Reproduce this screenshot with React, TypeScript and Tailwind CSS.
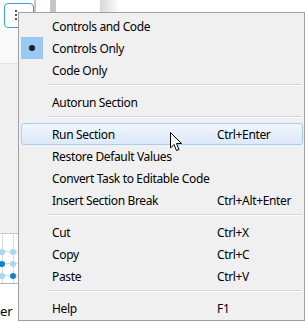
import React from 'react';

type Item = { label: string; shortcut?: string; checked?: boolean; active?: boolean } | 'sep';

const items: Item[] = [
  { label: 'Controls and Code' },
  { label: 'Controls Only', checked: true },
  { label: 'Code Only' },
  'sep',
  { label: 'Autorun Section' },
  'sep',
  { label: 'Run Section', shortcut: 'Ctrl+Enter', active: true },
  { label: 'Restore Default Values' },
  { label: 'Convert Task to Editable Code' },
  { label: 'Insert Section Break', shortcut: 'Ctrl+Alt+Enter' },
  'sep',
  { label: 'Cut', shortcut: 'Ctrl+X' },
  { label: 'Copy', shortcut: 'Ctrl+C' },
  { label: 'Paste', shortcut: 'Ctrl+V' },
  'sep',
  { label: 'Help', shortcut: 'F1' },
];

// Dots of the little grid in the background
const dots = [
  ['light', 'light'],
  ['dark', 'light'],
  ['light', 'dark'],
];

function Cursor() {
  return (
    <svg width="13" height="20" viewBox="0 0 13 20" className="absolute left-[170px] top-[132px]">
      <path
        d="M0.5 0.5 L0.5 16 L4 12.5 L6.5 18.5 L9 17.5 L6.5 11.5 L11.5 11.5 Z"
        fill="#fff"
        stroke="#000"
        strokeWidth="1"
        strokeLinejoin="miter"
      />
    </svg>
  );
}

export default function App() {
  return (
    <div
      className="relative w-[305px] h-[322px] overflow-hidden bg-white"
      style={{ fontFamily: '"Noto Sans", "Open Sans", sans-serif' }}
    >
      {/* background window */}
      <div className="flex h-full">
        <div className="flex flex-col w-[34px] h-full">
          <div className="h-[30px] bg-white pl-[4px] pt-[3px]">
            <div className="w-[30px] h-[25px] rounded-[4px] border border-[#3c9be6] flex flex-col items-start pl-[10px] pt-[6px] gap-[2px]">
              <span className="w-[2px] h-[2px] bg-[#555]" />
              <span className="w-[2px] h-[2px] bg-[#555]" />
              <span className="w-[2px] h-[2px] bg-[#555]" />
            </div>
          </div>
          <div className="h-[35px] bg-[#f9f9f9] border-b border-[#e2e2e2]" />
          <div className="h-[173px] bg-[#f0f0f0] border-b border-[#c8c8c8]" />
          <div className="relative h-[51px] bg-white flex flex-col pt-[15px] gap-[6px] border-b border-[#b4b4b4]">
            <div className="absolute left-[2px] top-0 bottom-0 w-px bg-[#d6dde3]" />
            <div className="absolute left-[13px] top-0 bottom-0 w-px bg-[#d6dde3]" />
            {dots.map((row, i) => (
              <div key={i} className="relative flex items-center h-[6px] gap-[5px] -ml-[1px]">
                <div className="absolute left-0 right-0 top-[2px] h-px bg-[#d6dde3]" />
                {row.map((d, j) => (
                  <span
                    key={j}
                    className={
                      d === 'dark'
                        ? 'relative w-[6px] h-[6px] rounded-full bg-[#0b83d4]'
                        : 'relative w-[6px] h-[6px] rounded-full bg-[#a6d8f2]'
                    }
                  />
                ))}
              </div>
            ))}
          </div>
          <div className="flex-1 bg-white pt-[14px]">
            <span className="whitespace-nowrap text-[13px] leading-[16px] text-black">er</span>
          </div>
        </div>
        <div className="w-[2px] h-[12px] bg-[#c4c4c4]" />
        <div className="w-[14px]" />
        <div className="w-[6px] h-[13px] bg-[#c6c6c6]" />
        <div className="w-[44px]" />
        <div className="w-[20px] h-[13px] bg-linear-to-r from-[#d8d8d8] to-white" />
      </div>

      {/* context menu */}
      <div className="absolute left-[18px] top-[12px] w-[287px] h-[309px] border border-[#a0a0a0] bg-[#f0f0f0] pt-[2px] pl-[2px] pr-[1px] text-[12px] tracking-[-0.35px] text-black">
        {items.map((it, i) =>
          it === 'sep' ? (
            <div key={i} className="h-[10px] pt-[3px] pl-[28px] pr-[1px]">
              <div className="h-[1px] bg-[#d7d7d7]" />
              <div className="h-[1px] bg-white" />
            </div>
          ) : (
            <div key={i} className="relative flex items-center h-[22px]">
              {it.active && (
                <div className="absolute inset-0 rounded-[3px] border border-[#a9cdf2] bg-linear-to-b from-[#f0f6fd] to-[#dce9f8]" />
              )}
              <div
                className={
                  it.checked
                    ? 'relative w-[22px] h-[22px] bg-[#98c9f6] flex items-center justify-center'
                    : 'relative w-[22px] h-[22px]'
                }
              >
                {it.checked && <span className="w-[6px] h-[6px] rounded-full bg-[#1e1e1e]" />}
              </div>
              <span className="relative ml-[9px] w-[165px] pt-[2px] whitespace-nowrap">{it.label}</span>
              {it.shortcut && <span className="relative pt-[2px] whitespace-nowrap">{it.shortcut}</span>}
            </div>
          )
        )}
      </div>

      <Cursor />
    </div>
  );
}
